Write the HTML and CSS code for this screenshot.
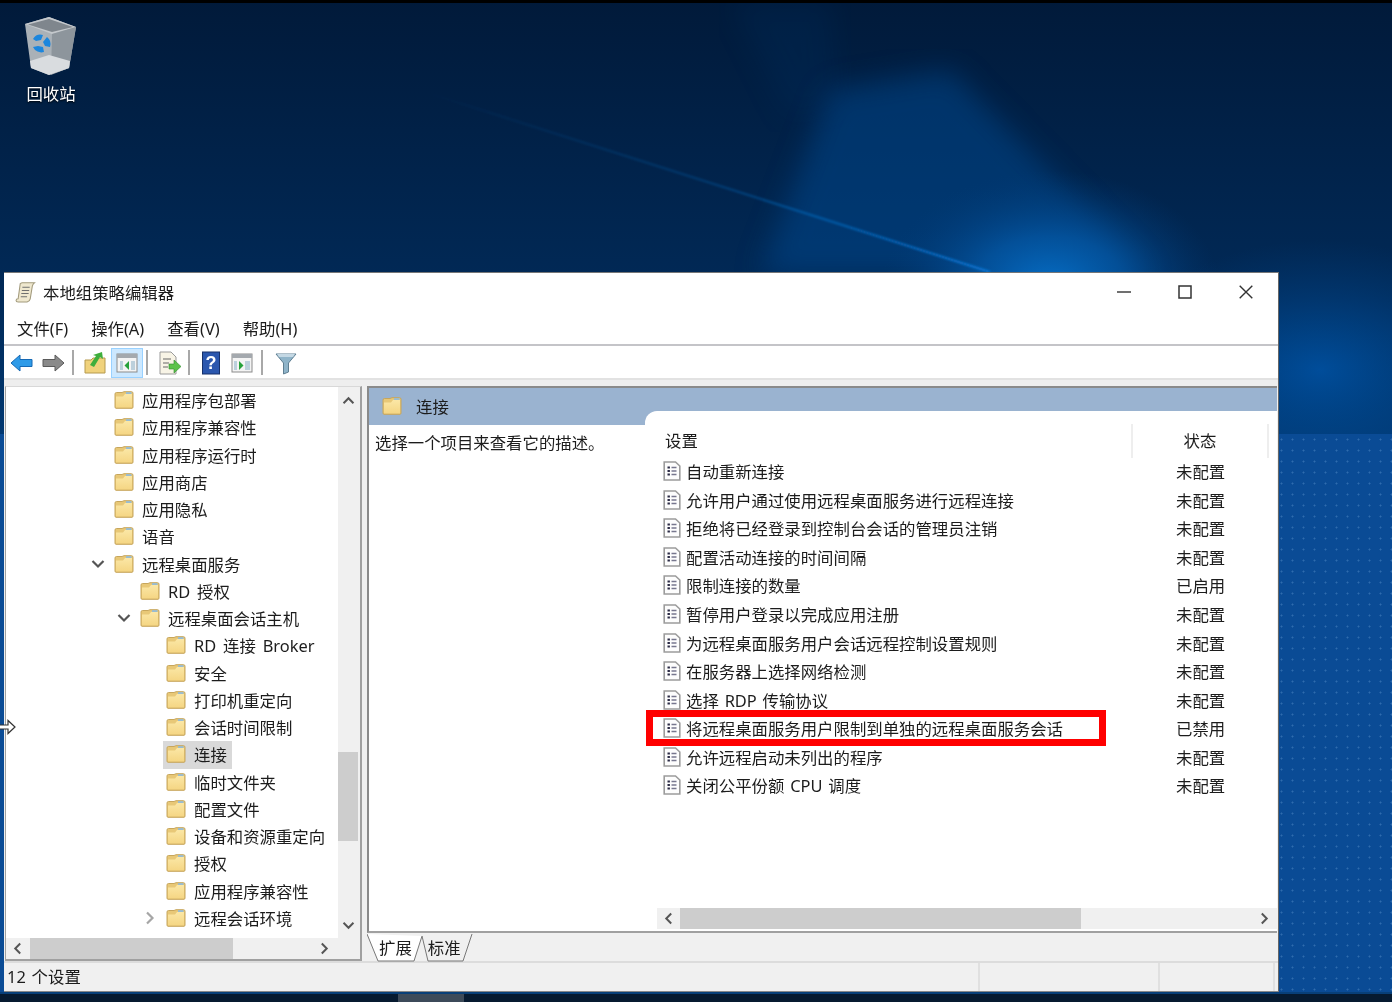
FILE: index.html
```html
<!DOCTYPE html>
<html lang="zh-CN">
<head>
  <meta charset="UTF-8">
  <title>本地组策略编辑器</title>
  <link rel="stylesheet" href="styles.css">
</head>
<body>

<svg class="defs" width="0" height="0">
  <linearGradient id="folder-fill" x1="0" y1="0" x2="0" y2="1">
    <stop offset="0" stop-color="#fbe7a6"/>
    <stop offset="1" stop-color="#f5d684"/>
  </linearGradient>
  <symbol id="folder" viewBox="0 0 20 18">
    <path d="M1 3 Q1 1.5 2.5 1.5 H8 L10 .7 H17.5 Q19 .7 19 2.2 V16 Q19 17.3 18 17.3 H2 Q1 17.3 1 16 Z" fill="#e8c877" stroke="#c7a65c"/>
    <path d="M2 5.5 H9 L11 3 H18 V16.3 H2 Z" fill="url(#folder-fill)"/>
    <rect x="12" y="1.2" width="5.5" height="1.7" fill="#8fbbdc"/>
  </symbol>
  <symbol id="doc" viewBox="0 0 18 20">
    <path d="M1.2 1 H12.5 L16.8 5 V19 H1.2 Z" fill="#fdfdfd" stroke="#9c9c9c" stroke-width="1.6"/>
    <path d="M4.5 6.5 h2.4 M4.5 10 h2.4 M4.5 13.5 h2.4" stroke="#2a2a44" stroke-width="2"/>
    <path d="M8.5 6.5 h5 M8.5 10 h5 M8.5 13.5 h5" stroke="#77778e" stroke-width="1.6"/>
  </symbol>
  <symbol id="chev-down" viewBox="0 0 14 10">
    <path d="M1.5 2 L7 7.5 L12.5 2" fill="none" stroke="#555" stroke-width="2.2"/>
  </symbol>
  <symbol id="chev-right" viewBox="0 0 10 14">
    <path d="M2 1.5 L7.5 7 L2 12.5" fill="none" stroke="currentColor" stroke-width="2.2"/>
  </symbol>
  <symbol id="chev-left" viewBox="0 0 10 14">
    <path d="M8 1.5 L2.5 7 L8 12.5" fill="none" stroke="currentColor" stroke-width="2.2"/>
  </symbol>
  <symbol id="chev-up" viewBox="0 0 14 10">
    <path d="M1.5 8 L7 2.5 L12.5 8" fill="none" stroke="currentColor" stroke-width="2.2"/>
  </symbol>
</svg>

<div class="desktop">
  <!-- 壁纸 -->
  <svg class="wallpaper" viewBox="0 0 1392 1002" preserveAspectRatio="none">
    <defs>
      <linearGradient id="wall" x1="0" y1="0" x2="0" y2="1">
        <stop offset="0" stop-color="#011a3a"/>
        <stop offset="0.3" stop-color="#012a58"/>
        <stop offset="0.45" stop-color="#013a75"/>
      </linearGradient>
      <radialGradient id="glow" cx="0.5" cy="0.5" r="0.5">
        <stop offset="0" stop-color="#0672cc"/>
        <stop offset="0.45" stop-color="#0458a6" stop-opacity=".75"/>
        <stop offset="1" stop-color="#023a75" stop-opacity="0"/>
      </radialGradient>
      <radialGradient id="glow-right" cx="0.5" cy="0.5" r="0.5">
        <stop offset="0" stop-color="#0050a0" stop-opacity=".9"/>
        <stop offset="1" stop-color="#004080" stop-opacity="0"/>
      </radialGradient>
      <linearGradient id="beam" gradientUnits="userSpaceOnUse" x1="428" y1="93" x2="990" y2="272">
        <stop offset="0" stop-color="#0a6cc0" stop-opacity="0"/>
        <stop offset="0.5" stop-color="#0a6cc0" stop-opacity=".35"/>
        <stop offset="1" stop-color="#0a78d8"/>
      </linearGradient>
      <filter id="soft"><feGaussianBlur stdDeviation="14"/></filter>
      <filter id="thin"><feGaussianBlur stdDeviation="1.2"/></filter>
    </defs>
    <rect width="1392" height="1002" fill="url(#wall)"/>
    <polygon points="730,0 830,0 840,100 790,120" fill="#02396f" opacity=".18" filter="url(#soft)"/>
    <polygon points="760,275 1150,275 950,70 830,90" fill="#034a90" opacity=".5" filter="url(#soft)"/>
    <ellipse cx="1050" cy="290" rx="170" ry="120" fill="url(#glow)"/>
    <ellipse cx="1320" cy="370" rx="200" ry="130" fill="url(#glow-right)"/>
    <path d="M428 93 L990 272" stroke="url(#beam)" stroke-width="2" fill="none" filter="url(#thin)"/>
  </svg>
  <div class="floor"></div>
  <div class="topbar"></div>

  <div class="desk-icon">
    <svg class="bin" viewBox="0 0 56 62">
      <path d="M2 9 L26 2 L53 12 L46 53 L26 60 L8 53 Z" fill="#aab1b7"/>
      <path d="M2 9 L26 2 L53 12 L29 19 Z" fill="#c4c8cc"/>
      <path d="M5 9.5 L26 4 L50 12 L29 17 Z" fill="#7f868d"/>
      <path d="M29 19 L53 12 L46 53 L28 60 Z" fill="#8d959c"/>
      <path d="M7 46 L26 40 L47 46 L46 53 L26 60 L8 53 Z" fill="#d9dcdf"/>
      <path d="M10 24 a9 9 0 0 1 10 -4 l-2 5 l-5 1 z M24 22 a9 9 0 0 1 3 10 l-5 -1 l-2 -4 z M21 37 a9 9 0 0 1 -11 -5 l5 -1 l5 1 z" fill="#1c86dd"/>
    </svg>
    <span class="desk-label">回收站</span>
  </div>

  <div class="window">
    <div class="titlebar">
      <svg class="app-icon" viewBox="0 0 20 20">
        <path d="M5 1.5 Q6 .8 7 .8 H18.5 Q17 2 16.5 4 L14.5 16 Q14 18.5 11.5 19 H3 Q1 19 1 17.5 Q1 16 3 16 Z" fill="#efe8cf" stroke="#a29a7c"/>
        <path d="M7 5 h7 M6.5 8 h7 M6 11 h7 M5.5 14 h6" stroke="#6f6f6f" stroke-width="1"/>
      </svg>
      <span class="title">本地组策略编辑器</span>
      <div class="win-controls">
        <svg class="win-btn" viewBox="0 0 14 14"><path d="M0 7 H14" stroke="#333" stroke-width="1.4"/></svg>
        <svg class="win-btn" viewBox="0 0 14 14"><rect x="1" y="1" width="12" height="12" fill="none" stroke="#333" stroke-width="1.5"/></svg>
        <svg class="win-btn" viewBox="0 0 14 14"><path d="M.7 .7 L13.3 13.3 M13.3 .7 L.7 13.3" stroke="#333" stroke-width="1.4"/></svg>
      </div>
    </div>

    <div class="menubar">
      <span>文件(F)</span>
      <span>操作(A)</span>
      <span>查看(V)</span>
      <span>帮助(H)</span>
    </div>

    <div class="toolbar">
      <svg class="tool" viewBox="0 0 24 24"><path d="M1 12 L10 4 V8.5 H22 V15.5 H10 V20 Z" fill="#2f9be8" stroke="#1569b5"/></svg>
      <svg class="tool" viewBox="0 0 24 24"><path d="M23 12 L14 4 V8.5 H2 V15.5 H14 V20 Z" fill="#8a8a8a" stroke="#5a5a5a"/></svg>
      <span class="tool-sep"></span>
      <svg class="tool" viewBox="0 0 24 24">
        <path d="M2 9 H8 L10 7 H22 V22 H2 Z" fill="#f0d27c" stroke="#b69a4e"/>
        <path d="M7 14 L13 5 L10 4 L19 1 L20 8 L17 6 L11 16 Z" fill="#3fae3c"/>
      </svg>
      <span class="tool-on">
        <svg class="tool" viewBox="0 0 24 24">
          <rect x="2" y="3" width="20" height="18" fill="#f4f4f4" stroke="#8b8b8b"/>
          <rect x="2" y="3" width="20" height="4" fill="#a4a9ae"/>
          <path d="M5 10 h3 v9 h-3 z M16 10 h4 v9 h-4 z" fill="#bcd0dc"/>
          <path d="M14 10 V19 L9.5 14.5 Z" fill="#27a13a"/>
        </svg>
      </span>
      <span class="tool-sep"></span>
      <svg class="tool" viewBox="0 0 24 24">
        <path d="M3 1 H14 L19 6 V23 H3 Z" fill="#f8f4e6" stroke="#9a9a9a"/>
        <path d="M6 8 h8 M6 12 h6 M6 16 h5" stroke="#666"/>
        <path d="M12 13 H17 V9 L24 15.5 L17 22 V18 H12 Z" fill="#5cc24a" stroke="#2e8c2c" stroke-width=".6"/>
      </svg>
      <span class="tool-sep"></span>
      <svg class="tool" viewBox="0 0 24 24">
        <rect x="3.5" y="1" width="17" height="22" fill="#2b57ae" stroke="#16316b"/>
        <text x="12" y="18" class="tool-q">?</text>
      </svg>
      <svg class="tool" viewBox="0 0 24 24">
        <rect x="2" y="3" width="20" height="18" fill="#f4f4f4" stroke="#8b8b8b"/>
        <rect x="2" y="3" width="20" height="4" fill="#a4a9ae"/>
        <path d="M4 10 h3 v9 h-3 z M15 10 h5 v9 h-5 z" fill="#bcd0dc"/>
        <path d="M9 10 V19 L13.5 14.5 Z" fill="#27a13a"/>
      </svg>
      <span class="tool-sep"></span>
      <svg class="tool tool-filter" viewBox="0 0 24 24">
        <path d="M2 3 H22 L14.5 12 V21 L9.5 23 V12 Z" fill="#8fb4c9" stroke="#5f7f92"/>
        <path d="M3 3 H21 L19 6 H5 Z" fill="#c4d8e4"/>
      </svg>
    </div>
    <div class="toolbar-gap"></div>

    <div class="panes">
      <!-- 左侧树 -->
      <div class="tree-pane">
        <div class="tree-main">
          <ul class="tree">
            <li class="node lvl0"><span class="tw"></span><svg class="folder"><use href="#folder"/></svg><span class="name">应用程序包部署</span></li>
            <li class="node lvl0"><span class="tw"></span><svg class="folder"><use href="#folder"/></svg><span class="name">应用程序兼容性</span></li>
            <li class="node lvl0"><span class="tw"></span><svg class="folder"><use href="#folder"/></svg><span class="name">应用程序运行时</span></li>
            <li class="node lvl0"><span class="tw"></span><svg class="folder"><use href="#folder"/></svg><span class="name">应用商店</span></li>
            <li class="node lvl0"><span class="tw"></span><svg class="folder"><use href="#folder"/></svg><span class="name">应用隐私</span></li>
            <li class="node lvl0"><span class="tw"></span><svg class="folder"><use href="#folder"/></svg><span class="name">语音</span></li>
            <li class="node lvl0"><span class="tw"><svg class="tw-down"><use href="#chev-down"/></svg></span><svg class="folder"><use href="#folder"/></svg><span class="name">远程桌面服务</span></li>
            <li class="node lvl1"><span class="tw"></span><svg class="folder"><use href="#folder"/></svg><span class="name">RD 授权</span></li>
            <li class="node lvl1"><span class="tw"><svg class="tw-down"><use href="#chev-down"/></svg></span><svg class="folder"><use href="#folder"/></svg><span class="name">远程桌面会话主机</span></li>
            <li class="node lvl2"><span class="tw"></span><svg class="folder"><use href="#folder"/></svg><span class="name">RD 连接 Broker</span></li>
            <li class="node lvl2"><span class="tw"></span><svg class="folder"><use href="#folder"/></svg><span class="name">安全</span></li>
            <li class="node lvl2"><span class="tw"></span><svg class="folder"><use href="#folder"/></svg><span class="name">打印机重定向</span></li>
            <li class="node lvl2"><span class="tw"></span><svg class="folder"><use href="#folder"/></svg><span class="name">会话时间限制</span></li>
            <li class="node lvl2 selected"><span class="tw"></span><svg class="folder"><use href="#folder"/></svg><span class="name">连接</span></li>
            <li class="node lvl2"><span class="tw"></span><svg class="folder"><use href="#folder"/></svg><span class="name">临时文件夹</span></li>
            <li class="node lvl2"><span class="tw"></span><svg class="folder"><use href="#folder"/></svg><span class="name">配置文件</span></li>
            <li class="node lvl2"><span class="tw"></span><svg class="folder"><use href="#folder"/></svg><span class="name">设备和资源重定向</span></li>
            <li class="node lvl2"><span class="tw"></span><svg class="folder"><use href="#folder"/></svg><span class="name">授权</span></li>
            <li class="node lvl2"><span class="tw"></span><svg class="folder"><use href="#folder"/></svg><span class="name">应用程序兼容性</span></li>
            <li class="node lvl2"><span class="tw"><svg class="tw-right"><use href="#chev-right"/></svg></span><svg class="folder"><use href="#folder"/></svg><span class="name">远程会话环境</span></li>
          </ul>
          <div class="vscroll">
            <svg class="sb-arrow-v"><use href="#chev-up"/></svg>
            <div class="vtrack"><div class="vthumb"></div></div>
            <svg class="sb-arrow-v"><use href="#chev-down"/></svg>
          </div>
        </div>
        <div class="hscroll tree-hscroll">
          <svg class="sb-arrow-h"><use href="#chev-left"/></svg>
          <div class="htrack"><div class="hthumb tree-thumb"></div></div>
          <svg class="sb-arrow-h"><use href="#chev-right"/></svg>
        </div>
      </div>

      <!-- 右侧详细信息 -->
      <div class="detail-col">
        <div class="detail-pane">
          <div class="detail-head">
            <svg class="folder head-folder"><use href="#folder"/></svg>
            <span>连接</span>
          </div>
          <div class="detail-body">
            <div class="desc">选择一个项目来查看它的描述。</div>
            <div class="list-wrap">
              <div class="list-head">
                <span class="col-name">设置</span>
                <span class="col-state">状态</span>
              </div>
              <ul class="list">
                <li class="row"><svg class="doc"><use href="#doc"/></svg><span class="row-name">自动重新连接</span><span class="row-state">未配置</span></li>
                <li class="row"><svg class="doc"><use href="#doc"/></svg><span class="row-name">允许用户通过使用远程桌面服务进行远程连接</span><span class="row-state">未配置</span></li>
                <li class="row"><svg class="doc"><use href="#doc"/></svg><span class="row-name">拒绝将已经登录到控制台会话的管理员注销</span><span class="row-state">未配置</span></li>
                <li class="row"><svg class="doc"><use href="#doc"/></svg><span class="row-name">配置活动连接的时间间隔</span><span class="row-state">未配置</span></li>
                <li class="row"><svg class="doc"><use href="#doc"/></svg><span class="row-name">限制连接的数量</span><span class="row-state">已启用</span></li>
                <li class="row"><svg class="doc"><use href="#doc"/></svg><span class="row-name">暂停用户登录以完成应用注册</span><span class="row-state">未配置</span></li>
                <li class="row"><svg class="doc"><use href="#doc"/></svg><span class="row-name">为远程桌面服务用户会话远程控制设置规则</span><span class="row-state">未配置</span></li>
                <li class="row"><svg class="doc"><use href="#doc"/></svg><span class="row-name">在服务器上选择网络检测</span><span class="row-state">未配置</span></li>
                <li class="row"><svg class="doc"><use href="#doc"/></svg><span class="row-name">选择 RDP 传输协议</span><span class="row-state">未配置</span></li>
                <li class="row"><svg class="doc"><use href="#doc"/></svg><span class="row-name">将远程桌面服务用户限制到单独的远程桌面服务会话</span><span class="row-state">已禁用</span><span class="mark"></span></li>
                <li class="row"><svg class="doc"><use href="#doc"/></svg><span class="row-name">允许远程启动未列出的程序</span><span class="row-state">未配置</span></li>
                <li class="row"><svg class="doc"><use href="#doc"/></svg><span class="row-name">关闭公平份额 CPU 调度</span><span class="row-state">未配置</span></li>
              </ul>
              <div class="hscroll list-hscroll">
                <svg class="sb-arrow-h"><use href="#chev-left"/></svg>
                <div class="htrack"><div class="hthumb list-thumb"></div></div>
                <svg class="sb-arrow-h"><use href="#chev-right"/></svg>
              </div>
            </div>
          </div>
        </div>
        <div class="tabs">
          <svg class="tab-shapes" viewBox="0 0 110 30">
            <path d="M55 3 L61 28 H96 L105 1" fill="#f0f0f0" stroke="#777"/>
            <path d="M0 1 L11 28 H47 L55 3" fill="#fff" stroke="#777"/>
          </svg>
          <span class="tab">扩展</span>
          <span class="tab">标准</span>
        </div>
      </div>
    </div>

    <div class="statusbar">
      <span class="status-main">12 个设置</span>
      <span class="status-cell cell-a"></span>
      <span class="status-cell cell-b"></span>
    </div>
  </div>

  <div class="taskbar"><span class="task-item"></span></div>

  <svg class="cursor" viewBox="0 0 16 16">
    <path d="M-4 6 H8 V1.5 L15 8 L8 14.5 V10 H-4 Z" fill="#fff" stroke="#333" stroke-width="1.2"/>
  </svg>
</div>

</body>
</html>
```

FILE: styles.css
```css
* {
  box-sizing: border-box;
}
html, body {
  margin: 0;
  padding: 0;
  height: 100%;
  overflow: hidden;
}
body {
  font-family: "Noto Sans", "Noto Sans CJK SC", sans-serif;
  font-size: 16.4px;
  color: #1c1c1c;
  background: #012a58;
  word-spacing: 1.6px;
}
ul {
  list-style: none;
  margin: 0;
  padding: 0;
}
.defs {
  position: absolute;
}
.desktop {
  position: relative;
  width: 1392px;
  height: 1002px;
  overflow: hidden;
}
.wallpaper {
  position: absolute;
  inset: 0;
  width: 100%;
  height: 100%;
}
.topbar {
  position: absolute;
  left: 0;
  right: 0;
  top: 0;
  height: 3px;
  background: #000;
}
.floor {
  position: absolute;
  left: 0;
  right: 0;
  top: 434px;
  bottom: 0;
  background-color: #0a4b95;
  background-image: radial-gradient(circle, #2f6cae 0.8px, transparent 1.2px);
  background-size: 11px 11px;
}
.cursor {
  position: absolute;
  left: 0;
  top: 719px;
  width: 16px;
  height: 16px;
  overflow: hidden;
}

.desk-icon {
  position: absolute;
  left: 12px;
  top: 15px;
  width: 78px;
  display: flex;
  flex-direction: column;
  align-items: center;
  color: #fff;
  filter: blur(.35px);
}
.bin {
  width: 56px;
  height: 62px;
}
.desk-label {
  margin-top: 5px;
  line-height: 24px;
  text-shadow: 0 1px 2px #000;
}

/* 窗口 */
.window {
  position: absolute;
  left: 4px;
  top: 272px;
  width: 1275px;
  height: 720px;
  background: #f0f0f0;
  border-top: 1px solid #777;
  border-right: 1px solid #666;
  border-bottom: 1px solid #888;
  display: flex;
  flex-direction: column;
  filter: blur(.35px);
}
.titlebar {
  height: 38px;
  flex: none;
  background: #fff;
  display: flex;
  align-items: center;
  padding-left: 11px;
}
.app-icon {
  width: 21px;
  height: 21px;
  margin-right: 7px;
}
.win-controls {
  margin-left: auto;
  display: flex;
  align-items: center;
  gap: 47px;
  padding-right: 25px;
}
.win-btn {
  width: 14px;
  height: 14px;
  display: block;
}
.menubar {
  height: 35px;
  flex: none;
  background: #fff;
  border-bottom: 2px solid #c4c4c8;
  display: flex;
  align-items: center;
  gap: 23px;
  padding-left: 13px;
  word-spacing: 0;
}
.toolbar {
  height: 32px;
  flex: none;
  background: #fff;
  display: flex;
  align-items: center;
  padding: 1px 0 0 6px;
  gap: 7px;
}
.tool {
  width: 24px;
  height: 24px;
  flex: none;
  display: block;
}
.tool-filter {
  margin-left: 2px;
}
.tool-q {
  font-family: "Liberation Sans", sans-serif;
  font-size: 18px;
  font-weight: 700;
  fill: #fff;
  text-anchor: middle;
}
.tool-sep {
  width: 2px;
  height: 25px;
  background: #a8a8a8;
  margin: 0 2px 0 0;
}
.tool-on {
  width: 32px;
  height: 30px;
  background: #cce8ff;
  border: 1px solid #99d1ff;
  display: flex;
  align-items: center;
  justify-content: center;
  margin: 0 -4px 0 -3px;
}
.toolbar-gap {
  height: 8px;
  flex: none;
  background: #eeeeee;
  border-top: 2px solid #e2e2e2;
}

.panes {
  flex: 1;
  display: flex;
  min-height: 0;
}

/* 左侧树 */
.tree-pane {
  width: 357px;
  flex: none;
  margin-left: 1px;
  background: #f0f0f0;
  border: 2px solid #a0a0a0;
  border-left-width: 1px;
  border-top: 1px solid #d8d8d8;
  display: flex;
  flex-direction: column;
}
.tree-main {
  flex: 1;
  display: flex;
  min-height: 0;
}
.tree {
  flex: 1;
  background: #fff;
  overflow: hidden;
  word-spacing: 2.6px;
}
.node {
  height: 27.26px;
  display: flex;
  align-items: center;
  padding-bottom: 1px;
}
.lvl0 { padding-left: 84px; }
.lvl1 { padding-left: 110px; }
.lvl2 { padding-left: 136px; }
.tw {
  width: 16px;
  height: 16px;
  margin-right: 8px;
  flex: none;
  display: flex;
  align-items: center;
  justify-content: center;
}
.tw-down {
  width: 14px;
  height: 10px;
}
.tw-right {
  width: 10px;
  height: 14px;
  color: #a6a6a6;
}
.folder {
  width: 20px;
  height: 18px;
  flex: none;
}
.name {
  margin-left: 8px;
  white-space: nowrap;
}
.selected {
  position: relative;
}
.selected .name,
.selected .folder {
  z-index: 1;
  position: relative;
}
.selected::before {
  content: "";
  position: absolute;
  left: 157px;
  width: 69px;
  top: 0;
  bottom: 0;
  background: #d9d9d9;
}
.vscroll {
  width: 20px;
  flex: none;
  background: #f0f0f0;
  margin-right: 2px;
  display: flex;
  flex-direction: column;
  align-items: center;
  padding: 9px 0 8px;
}
.vtrack {
  flex: 1;
  width: 100%;
  padding-top: 347px;
}
.vthumb {
  height: 89px;
  background: #cdcdcd;
}
.sb-arrow-v {
  width: 13px;
  height: 9px;
  color: #555;
}
.hscroll {
  height: 21px;
  flex: none;
  display: flex;
  align-items: center;
  background: #f0f0f0;
  color: #555;
}
.sb-arrow-h {
  width: 9px;
  height: 13px;
  flex: none;
}
.htrack {
  flex: 1;
  height: 100%;
  margin: 0 7px;
}
.hthumb {
  height: 100%;
  background: #cdcdcd;
}
.tree-hscroll {
  padding: 0 31px 0 7px;
}
.tree-thumb {
  width: 203px;
}
.tree-hscroll .htrack {
  margin: 0 8px;
}

/* 右侧 */
.detail-col {
  flex: 1;
  min-width: 0;
  margin-left: 5px;
  display: flex;
  flex-direction: column;
}
.detail-pane {
  height: 547px;
  flex: none;
  border-top: 2px solid #8a8a8a;
  border-left: 2px solid #8a8a8a;
  border-bottom: 2px solid #a0a0a0;
  margin-right: 1px;
  background: #fff;
  display: flex;
  flex-direction: column;
}
.detail-head {
  height: 37px;
  flex: none;
  background: #9ab3d0;
  display: flex;
  align-items: center;
  padding: 0 0 2px 13px;
}
.head-folder {
  margin-right: 14px;
}
.detail-body {
  flex: 1;
  display: flex;
  min-height: 0;
  background: #fff;
}
.desc {
  width: 276px;
  flex: none;
  padding: 5px 0 0 6px;
  white-space: nowrap;
}
.list-wrap {
  flex: 1;
  min-width: 0;
  margin-top: -14px;
  background: #fff;
  border-top-left-radius: 12px;
  display: flex;
  flex-direction: column;
}
.list-head {
  height: 34px;
  margin-top: 13px;
  flex: none;
  display: flex;
  align-items: center;
}
.col-name {
  width: 488px;
  height: 34px;
  padding-left: 20px;
  line-height: 33px;
  border-right: 2px solid #eeeeee;
}
.col-state {
  width: 136px;
  height: 34px;
  text-align: center;
  line-height: 33px;
  border-right: 2px solid #eeeeee;
}
.list {
  flex: 1;
  min-height: 0;
  margin-top: -1px;
}
.row {
  position: relative;
  height: 28.55px;
  display: flex;
  align-items: center;
  padding-left: 18px;
}
.doc {
  width: 18px;
  height: 20px;
  flex: none;
}
.row-name {
  margin-left: 5px;
  width: 490px;
  flex: none;
  white-space: nowrap;
}
.row-state {
  white-space: nowrap;
}
.mark {
  position: absolute;
  left: 1px;
  top: -4px;
  width: 460px;
  height: 36px;
  border: 7px solid #ff0000;
}
.list-hscroll {
  height: 21px;
  margin: 0 0 2px 12px;
  padding: 0 8px 0 7px;
}
.list-hscroll .htrack {
  margin: 0 7px;
}
.list-thumb {
  width: 401px;
}
.tabs {
  flex: 1;
  position: relative;
  display: flex;
  align-items: flex-start;
  gap: 16px;
  padding: 1px 0 0 12px;
}
.tab-shapes {
  position: absolute;
  left: 0;
  top: 0;
  width: 110px;
  height: 30px;
}
.tab {
  position: relative;
  line-height: 28px;
}

.statusbar {
  height: 30px;
  flex: none;
  border-top: 2px solid #dcdcdc;
  display: flex;
  align-items: stretch;
  line-height: 28px;
  background: #f0f0f0;
}
.status-main {
  width: 974px;
  padding-left: 3px;
}
.status-cell {
  border-left: 2px solid #e0e0e0;
}
.cell-a {
  width: 180px;
}
.cell-b {
  width: 117px;
  border-right: 2px solid #e0e0e0;
}

.taskbar {
  position: absolute;
  left: 0;
  right: 0;
  bottom: 0;
  height: 10px;
  background: #061a30;
  border-top: 2px solid #083f78;
}
.task-item {
  display: block;
  position: absolute;
  left: 398px;
  top: 0;
  width: 66px;
  height: 100%;
  background: #3c4a59;
}
```
